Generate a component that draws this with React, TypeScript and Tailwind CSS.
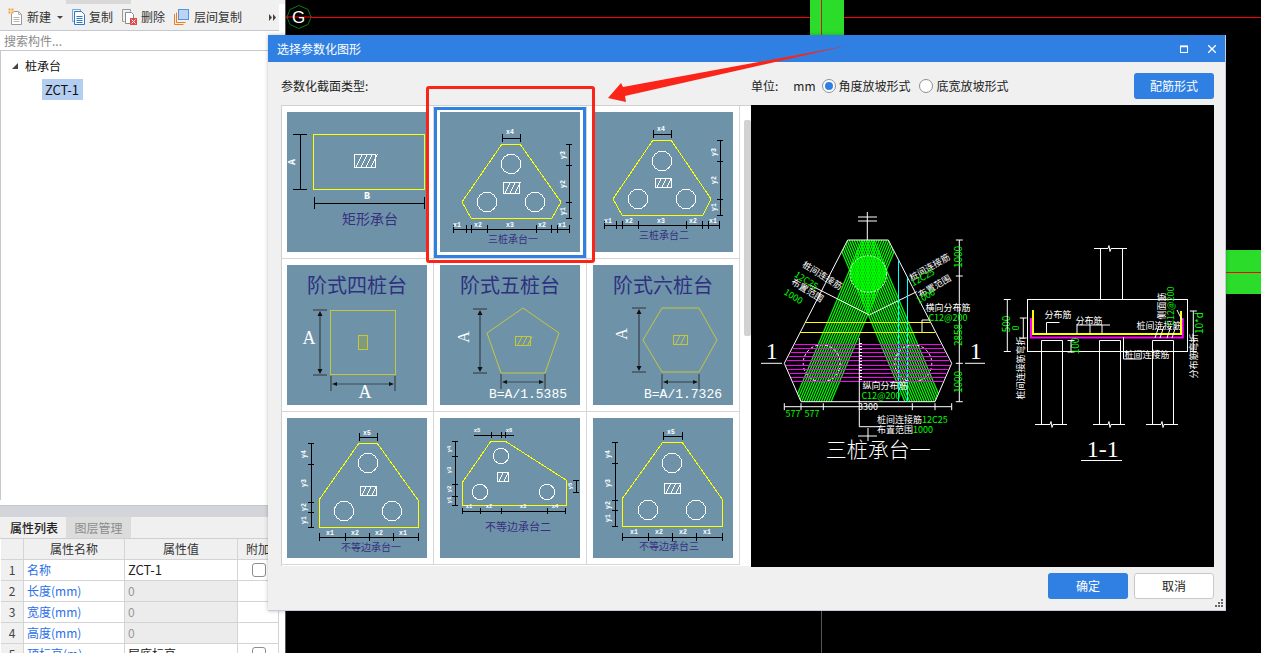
import React from "react";

const Y = "#ffff00";
const W = "#ffffff";
const K = "#000000";
const TITLE = "#37307f";

function HDim({ y, xs, t = 4 }: { y: number; xs: number[]; t?: number }) {
  return (
    <g stroke={K} strokeWidth={1}>
      <line x1={xs[0]} y1={y} x2={xs[xs.length - 1]} y2={y} />
      {xs.map((x) => (
        <line key={x} x1={x} y1={y - t} x2={x} y2={y + t} />
      ))}
    </g>
  );
}
function VDim({ x, ys, t = 3 }: { x: number; ys: number[]; t?: number }) {
  return (
    <g stroke={K} strokeWidth={1}>
      <line x1={x} y1={ys[0]} x2={x} y2={ys[ys.length - 1]} />
      {ys.map((y) => (
        <line key={y} x1={x - t} y1={y} x2={x + t} y2={y} />
      ))}
    </g>
  );
}
function L({ x, y, s, r, size = 6.5 }: { x: number; y: number; s: string; r?: boolean; size?: number }) {
  return (
    <text
      x={x}
      y={y}
      fontSize={size}
      fill={W}
      fontWeight={700}
      textAnchor="middle"
      dominantBaseline="middle"
      fontFamily="'Liberation Mono', monospace"
      transform={r ? `rotate(-90 ${x} ${y})` : undefined}
    >
      {s}
    </text>
  );
}
function Hatch({ x, y, w, h, c = W }: { x: number; y: number; w: number; h: number; c?: string }) {
  const n = Math.floor(w / 5);
  return (
    <g stroke={c} fill="none" strokeWidth={1}>
      <rect x={x} y={y} width={w} height={h} />
      {Array.from({ length: n }, (_, i) => (
        <line key={i} x1={x + 2 + i * 5} y1={y + h} x2={x + 2 + i * 5 + h * 0.5} y2={y} />
      ))}
    </g>
  );
}
function Circles({ cs, r = 9.7 }: { cs: number[][]; r?: number }) {
  return (
    <g stroke={W} fill="none" strokeWidth={1}>
      {cs.map((c) => (
        <circle key={c[0] + "-" + c[1]} cx={c[0]} cy={c[1]} r={r} />
      ))}
    </g>
  );
}
function Poly({ p, c = Y, w = 1 }: { p: number[][]; c?: string; w?: number }) {
  return <polygon points={p.map((a) => a.join(",")).join(" ")} fill="none" stroke={c} strokeWidth={w} />;
}
function Cap({ x, y, s, size = 10 }: { x: number; y: number; s: string; size?: number }) {
  return (
    <text x={x} y={y} fontSize={size} fill={TITLE} textAnchor="middle" dominantBaseline="middle">
      {s}
    </text>
  );
}
function SerifTitle({ s }: { s: string }) {
  return (
    <text
      x={70}
      y={23}
      fontSize={20}
      fill="#2f3180"
      textAnchor="middle"
      dominantBaseline="middle"
      fontFamily="'Noto Sans CJK SC', serif"
    >
      {s}
    </text>
  );
}
function Arrow2H({ y, a, b }: { y: number; a: number; b: number }) {
  return (
    <g>
      <line x1={a} y1={y - 8} x2={a} y2={y + 7} stroke="#333" />
      <line x1={b} y1={y - 8} x2={b} y2={y + 7} stroke="#333" />
      <line x1={a + 3} y1={y} x2={b - 3} y2={y} stroke="#3d4a55" strokeWidth={1.2} />
      <polygon points={`${a + 1},${y} ${a + 6},${y - 2} ${a + 6},${y + 2}`} fill="#111" />
      <polygon points={`${b - 1},${y} ${b - 6},${y - 2} ${b - 6},${y + 2}`} fill="#111" />
    </g>
  );
}
function Arrow2V({ x, a, b }: { x: number; a: number; b: number }) {
  return (
    <g>
      <line x1={x - 7} y1={a} x2={x + 7} y2={a} stroke="#333" />
      <line x1={x - 7} y1={b} x2={x + 7} y2={b} stroke="#333" />
      <line x1={x} y1={a + 3} x2={x} y2={b - 3} stroke="#3d4a55" strokeWidth={1.4} />
      <polygon points={`${x},${a + 1} ${x - 2.5},${a + 6} ${x + 2.5},${a + 6}`} fill="#111" />
      <polygon points={`${x},${b - 1} ${x - 2.5},${b - 6} ${x + 2.5},${b - 6}`} fill="#111" />
    </g>
  );
}
function DimHatch({ x, y, w, h }: { x: number; y: number; w: number; h: number }) {
  return <Hatch x={x} y={y} w={w} h={h} c="#c4c63c" />;
}

const thumbs: React.ReactNode[] = [
  <g key="1" shapeRendering="crispEdges">
    <rect x={26} y={22} width={111} height={55} fill="none" stroke={Y} />
    <Hatch x={67} y={42} w={21} h={13} />
    <VDim x={13} ys={[22, 77]} t={7} />
    <HDim y={91} xs={[27, 137]} t={6} />
    <L x={5} y={50} s="A" r size={10} />
    <L x={80} y={84} s="B" size={10} />
    <Cap x={83} y={108} s="矩形承台" size={14} />
  </g>,
  <g key="2" shapeRendering="crispEdges">
    <Poly p={[[62, 32], [80, 32], [121, 90], [112, 106], [31, 106], [22, 90]]} />
    <Circles cs={[[71, 52], [47, 90], [95, 90]]} />
    <Hatch x={63} y={70} w={16} h={11} />
    <HDim y={26} xs={[62, 80]} />
    <L x={70} y={20} s="x4" />
    <VDim x={129} ys={[32, 53, 90, 106]} />
    <L x={123} y={43} s="y3" r />
    <L x={123} y={72} s="y2" r />
    <L x={123} y={99} s="y1" r />
    <HDim y={117} xs={[13, 26, 31, 47, 96, 111, 117, 129]} />
    <L x={17} y={113} s="x1" />
    <L x={38} y={113} s="x2" />
    <L x={70} y={113} s="x3" />
    <L x={102} y={113} s="x2" />
    <L x={122} y={113} s="x1" />
    <Cap x={73} y={128} s="三桩承台一" />
  </g>,
  <g key="3" shapeRendering="crispEdges">
    <Poly p={[[60, 28], [78, 28], [118, 87], [110, 103], [29, 103], [20, 87]]} />
    <Circles cs={[[69, 49], [45, 87], [93, 87]]} />
    <Hatch x={62} y={66} w={16} h={9} />
    <HDim y={22} xs={[60, 78]} />
    <L x={68} y={17} s="x4" />
    <VDim x={127} ys={[28, 49, 87, 103]} />
    <L x={121} y={40} s="y3" r />
    <L x={121} y={68} s="y2" r />
    <L x={121} y={95} s="y1" r />
    <HDim y={113} xs={[11, 23, 29, 45, 93, 109, 115, 126]} />
    <L x={15} y={109} s="x1" />
    <L x={36} y={109} s="x2" />
    <L x={68} y={109} s="x3" />
    <L x={100} y={109} s="x2" />
    <L x={120} y={109} s="x1" />
    <Cap x={71} y={124} s="三桩承台二" />
  </g>,
  <g key="4">
    <SerifTitle s="阶式四桩台" />
    <rect x={43.5} y={45.5} width={65} height={64} fill="none" stroke="#c4c63c" />
    <rect x={71.5} y={70.5} width={9} height={14} fill="#7f9a7e" stroke="#c4c63c" />
    <Arrow2V x={33} a={45} b={110} />
    <Arrow2H y={119} a={44} b={108} />
    <text x={22} y={75} fontSize={18} fill={W} textAnchor="middle" dominantBaseline="middle" fontFamily="'Liberation Serif', serif">A</text>
    <text x={78} y={129} fontSize={18} fill={W} textAnchor="middle" dominantBaseline="middle" fontFamily="'Liberation Serif', serif">A</text>
  </g>,
  <g key="5">
    <SerifTitle s="阶式五桩台" />
    <Poly c="#c4c63c" p={[[83, 43], [119, 68], [105, 108], [61, 108], [47, 68]]} />
    <DimHatch x={75.5} y={71.5} w={15} h={9} />
    <Arrow2V x={40} a={44} b={108} />
    <Arrow2H y={117} a={61} b={105} />
    <text x={25} y={72} fontSize={16} fill={W} textAnchor="middle" dominantBaseline="middle" fontFamily="'Liberation Serif', serif" transform="rotate(-90 25 72)">A</text>
    <text x={49} y={133} fontSize={13} fill={W} fontFamily="'Liberation Mono', monospace">B=A/1.5385</text>
  </g>,
  <g key="6">
    <SerifTitle s="阶式六桩台" />
    <Poly c="#c4c63c" p={[[69, 43], [106, 43], [124, 75], [106, 107], [69, 107], [50, 75]]} />
    <DimHatch x={80.5} y={70.5} w={14} h={9} />
    <Arrow2V x={46} a={43} b={107} />
    <Arrow2H y={117} a={69} b={106} />
    <text x={30} y={69} fontSize={16} fill={W} textAnchor="middle" dominantBaseline="middle" fontFamily="'Liberation Serif', serif" transform="rotate(-90 30 69)">A</text>
    <text x={51} y={133} fontSize={13} fill={W} fontFamily="'Liberation Mono', monospace">B=A/1.7326</text>
  </g>,
  <g key="7" shapeRendering="crispEdges">
    <Poly p={[[72, 25], [90, 25], [131, 82], [131, 109], [32, 109], [32, 82]]} />
    <Circles cs={[[81, 45], [57, 93], [105, 93]]} />
    <Hatch x={73} y={68} w={16} h={9} />
    <HDim y={19} xs={[72, 90]} />
    <L x={80} y={15} s="x5" />
    <VDim x={24} ys={[25, 46, 84, 94, 109]} />
    <L x={17} y={36} s="y4" r />
    <L x={17} y={65} s="y3" r />
    <L x={17} y={89} s="y2" r />
    <L x={17} y={102} s="y1" r />
    <HDim y={119} xs={[32, 58, 82, 106, 131]} />
    <L x={43} y={115} s="x1" />
    <L x={68} y={115} s="x2" />
    <L x={92} y={115} s="x2" />
    <L x={116} y={115} s="x1" />
    <Cap x={84} y={130} s="不等边承台一" />
  </g>,
  <g key="8" shapeRendering="crispEdges">
    <Poly p={[[51, 23], [65, 23], [126, 62], [126, 87], [22, 87], [22, 65]]} />
    <Circles cs={[[61, 38], [40, 74], [107, 74]]} r={7.7} />
    <Hatch x={57} y={54} w={11} h={9} />
    <HDim y={17} xs={[51, 61, 65]} t={3} />
    <line x1={34} y1={17} x2={51} y2={17} stroke={K} />
    <line x1={65} y1={17} x2={74} y2={17} stroke={K} />
    <L x={37} y={13} s="x5" size={5.5} />
    <L x={69} y={13} s="x6" size={5.5} />
    <VDim x={15} ys={[23, 38, 66, 78, 87]} />
    <L x={10} y={31} s="y4" r size={5.5} />
    <L x={10} y={52} s="y3" r size={5.5} />
    <L x={10} y={71} s="y2" r size={5.5} />
    <L x={10} y={82} s="y1" r size={5.5} />
    <VDim x={136} ys={[62, 74]} />
    <L x={131} y={68} s="y5" r size={5.5} />
    <HDim y={93} xs={[22, 40, 61, 107, 125]} t={3} />
    <L x={29} y={89} s="x1" size={5.5} />
    <L x={49} y={89} s="x2" size={5.5} />
    <L x={83} y={89} s="x3" size={5.5} />
    <L x={115} y={89} s="x4" size={5.5} />
    <Cap x={78} y={110} s="不等边承台二" size={11} />
  </g>,
  <g key="9" shapeRendering="crispEdges">
    <Poly p={[[70, 24], [89, 24], [129, 81], [129, 108], [29, 108], [29, 81]]} />
    <Circles cs={[[79, 45], [55, 92], [103, 92]]} />
    <Hatch x={71} y={65} w={16} h={10} />
    <HDim y={18} xs={[70, 89]} />
    <L x={78} y={14} s="x5" />
    <VDim x={22} ys={[24, 45, 82, 92, 108]} />
    <L x={15} y={36} s="y4" r />
    <L x={15} y={65} s="y3" r />
    <L x={15} y={87} s="y2" r />
    <L x={15} y={100} s="y1" r />
    <HDim y={119} xs={[29, 55, 79, 103, 129]} />
    <L x={41} y={114} s="x1" />
    <L x={66} y={114} s="x2" />
    <L x={90} y={114} s="x2" />
    <L x={114} y={114} s="x1" />
    <Cap x={76} y={129} s="不等边承台三" />
  </g>,
];

function GT({
  x,
  y,
  s,
  r = 0,
  c = W,
  size = 9,
  a = "middle",
  serif,
  light,
}: {
  x: number;
  y: number;
  s: string;
  r?: number;
  c?: string;
  size?: number;
  a?: "middle" | "start";
  serif?: boolean;
  light?: boolean;
}) {
  return (
    <text
      x={x}
      y={y}
      fontSize={size}
      fill={c}
      textAnchor={a}
      dominantBaseline="middle"
      fontFamily={serif ? "'Liberation Serif', serif" : undefined}
      fontWeight={light ? 300 : undefined}
      transform={r ? `rotate(${r} ${x} ${y})` : undefined}
    >
      {s}
    </text>
  );
}

const GREEN = "#00ff00";

function CadDrawing() {
  const bandLines = Array.from({ length: 16 }, (_, i) => i * 2.45);
  const magenta = Array.from({ length: 10 }, (_, i) => 433 + i * 12.4);
  const leftAt = (y: number) => (y <= 490 ? 103 + ((490 - y) * 190) / 370 : 103 + ((y - 490) * 50) / 115);
  return (
    <svg viewBox="751 105 463 462" className="block w-full h-full">
      <defs>
        <clipPath id="hexClip">
          <polygon points="847.7,240 888.3,240 951.7,363.3 935,401.7 801,401.7 784.3,363.3" />
        </clipPath>
      </defs>
      <g stroke={GREEN} strokeWidth={1.25} clipPath="url(#hexClip)">
        {bandLines.map((d) => (
          <line key={"a" + d} x1={794.3 + d} y1={401.7} x2={862.2 + d} y2={240} />
        ))}
        {bandLines.map((d) => (
          <line key={"b" + d} x1={941.7 - d} y1={401.7} x2={873.8 - d} y2={240} />
        ))}
      </g>
      <circle cx={868.3} cy={274} r={18.3} fill={GREEN} fillOpacity={0.6} stroke={W} strokeDasharray="2 1.5" />
      <circle cx={821.7} cy={363.3} r={18.5} fill="none" stroke={W} strokeDasharray="3 2" />
      <circle cx={913.3} cy={363.3} r={18.5} fill="none" stroke={W} strokeDasharray="3 2" />
      <polygon points="847.7,240 888.3,240 951.7,363.3 935,401.7 801,401.7 784.3,363.3" fill="none" stroke={W} />
      <polyline points="810,285 869.3,315 916.7,291.7" fill="none" stroke={W} />
      <line x1={867.3} y1={212} x2={867.3} y2={240} stroke={W} />
      <line x1={858} y1={217} x2={877} y2={217} stroke={W} />
      <line x1={858} y1={221} x2={877} y2={221} stroke={W} />
      <g shapeRendering="crispEdges">
        <line x1={805} y1={322.3} x2={930} y2={322.3} stroke={Y} />
        <line x1={800} y1={332.7} x2={935} y2={332.7} stroke={Y} />
        <line x1={898.3} y1={260} x2={898.3} y2={401.7} stroke="#00ffff" />
        <line x1={907.3} y1={278.3} x2={907.3} y2={401.7} stroke="#00ffff" />
        {magenta.map((y) => (
          <line key={y} x1={750 + leftAt(y) / 3 + 1} y1={200 + y / 3} x2={750 + (708 - leftAt(y)) / 3 - 1} y2={200 + y / 3} stroke="#ff00ff" />
        ))}
      </g>
      <polyline points="859.3,338 859.3,426.7 880,426.7" fill="none" stroke={W} />
      <line x1={860.5} y1={343} x2={860.5} y2={382} stroke={W} strokeDasharray="1 2" strokeWidth={3} />
      <polyline points="922,332 922,320 930,320" fill="none" stroke={W} />
      <line x1={868} y1={428} x2={868} y2={441} stroke={W} />
      <line x1={858} y1={436} x2={877} y2={436} stroke={W} />
      <VDim2 x={959.3} ys={[240, 276, 363.3, 401.7]} />
      <HDim2 y={406.7} xs={[784.3, 801, 823.3, 912.3, 935, 951.7]} />
      <GT x={959.3} y={257} s="1000" r={-90} c={GREEN} size={10} />
      <GT x={959.3} y={335} s="2858" r={-90} c={GREEN} size={10} />
      <GT x={959.3} y={382} s="1000" r={-90} c={GREEN} size={10} />
      <GT x={793} y={415} s="577" c={GREEN} />
      <GT x={812} y={415} s="577" c={GREEN} />
      <GT x={868} y={408} s="3300" />
      <GT x={771.7} y={353} s="1" size={24} serif />
      <line x1={761} y1={363.3} x2={782} y2={363.3} stroke={W} />
      <GT x={975.7} y={353} s="1" size={24} serif />
      <line x1={965} y1={363.3} x2={985} y2={363.3} stroke={W} />
      <GT x={878.3} y={451} s="三桩承台一" size={21} light />
      <GT x={822} y={276} s="桩间连接筋" r={32} />
      <GT x={806} y={281} s="12C25" r={32} c={GREEN} />
      <GT x={807} y={291} s="布置范围" r={32} />
      <GT x={793} y={297} s="1000" r={32} c={GREEN} />
      <GT x={930} y={268} s="桩间连接筋" r={-30} />
      <GT x={923} y={278} s="12C25" r={-30} c={GREEN} />
      <GT x={935} y={287} s="布置范围" r={-30} />
      <GT x={926} y={297} s="1000" r={-30} c={GREEN} />
      <GT x={948} y={309} s="横向分布筋" />
      <GT x={948} y={319} s="C12@200" c={GREEN} />
      <GT x={885} y={387} s="纵向分布筋" />
      <GT x={881} y={397} s="C12@200" c={GREEN} />
      <GT x={877} y={421} s="桩间连接筋" a="start" />
      <GT x={922} y={421} s="12C25" c={GREEN} a="start" />
      <GT x={877} y={431} s="布置范围" a="start" />
      <GT x={913} y={431} s="1000" c={GREEN} a="start" />

      {/* 1-1 section */}
      <rect x={1027.5} y={299.5} width={160} height={52} fill="none" stroke={W} />
      <path d="M1100.5 248v51M1122.5 248v51M1094 248.5h14l1 -3l1 6l1 -3h16" fill="none" stroke={W} />
      <path d="M1041.5 340.5v84M1062.5 340.5v84M1041.5 340.5h21M1099.5 340.5v84M1120.5 340.5v84M1099.5 340.5h21M1152.5 340.5v84M1173.5 340.5v84M1152.5 340.5h21" fill="none" stroke={W} />
      <path d="M1035 424.5h15l1 -3l1 6l1 -3h14M1093 424.5h15l1 -3l1 6l1 -3h14M1146 424.5h15l1 -3l1 6l1 -3h14" fill="none" stroke={W} />
      <path d="M1031 318v19.5h151.7v-19.5" fill="none" stroke="#ff00ff" strokeWidth={2} />
      <path d="M1033 310v24h148v-23" fill="none" stroke={Y} strokeWidth={2} />
      <path d="M1046.5 334v-11.5h13M1077 334v-9h33M1090 325v9M1102 325v9" fill="none" stroke={W} />
      <path d="M1123.5 337v22h18" fill="none" stroke={W} />
      <path d="M1155 338l4 -12M1160 338l4 -12M1167 338l4 -12M1172 338l4 -12M1177 310l5 10" fill="none" stroke={W} />
      <GT x={1058} y={316} s="分布筋" />
      <GT x={1089} y={322} s="分布筋" />
      <GT x={1159} y={327} s="桩间连接筋" />
      <GT x={1147} y={356} s="桩间连接筋" />
      <GT x={1163} y={306} s="侧面筋" r={-90} />
      <GT x={1172} y={306} s="C12@200" r={-90} c={GREEN} />
      <GT x={1007} y={324} s="500" r={-90} c={GREEN} size={10} />
      <GT x={1017} y={328} s="0" r={-90} c={GREEN} />
      <GT x={1076} y={346} s="100" r={-90} c={GREEN} size={10} />
      <GT x={1200} y={323} s="10*d" r={-90} c={GREEN} size={10} />
      <GT x={1022} y={368} s="桩间连接筋弯折" r={-90} />
      <GT x={1195} y={356} s="分布筋弯折" r={-90} />
      <VDim2 x={1007.3} ys={[299.5, 351.5]} />
      <VDim2 x={1023.3} ys={[318, 338]} />
      <VDim2 x={1071} ys={[340.5, 352]} />
      <VDim2 x={1193.3} ys={[311, 351.5]} />
      <GT x={1102.7} y={451} s="1-1" size={24} serif />
      <line x1={1081} y1={460.5} x2={1122} y2={460.5} stroke={W} />
    </svg>
  );
}
function VDim2({ x, ys }: { x: number; ys: number[] }) {
  return (
    <g stroke={W}>
      <line x1={x} y1={ys[0]} x2={x} y2={ys[ys.length - 1]} />
      {ys.map((y) => (
        <line key={y} x1={x - 3.5} y1={y} x2={x + 3.5} y2={y} />
      ))}
    </g>
  );
}
function HDim2({ y, xs }: { y: number; xs: number[] }) {
  return (
    <g stroke={W}>
      <line x1={xs[0]} y1={y} x2={xs[xs.length - 1]} y2={y} />
      {xs.map((x) => (
        <line key={x} x1={x} y1={y - 3.5} x2={x} y2={y + 3.5} />
      ))}
    </g>
  );
}

const IconNew = () => (
  <svg width="16" height="18" viewBox="0 0 16 18" fill="none">
    <path d="M3.5 3.5h7l3 3v10h-10z" fill="#fff" stroke="#9a9a9a" />
    <path d="M10.5 3.5v3h3M5.5 9.5h6M5.5 11.5h6M5.5 13.5h6" stroke="#b5b5b5" />
    <rect x="0.5" y="0.5" width="5" height="5" fill="#f6a43c" />
    <path d="M3 0v6M0 3h6" stroke="#fff" strokeWidth="0.7" />
  </svg>
);
const IconCopy = () => (
  <svg width="14" height="16" viewBox="0 0 14 16" fill="none">
    <path d="M.5 .5h8v2" stroke="#7fa8d8" />
    <path d="M.5 .5v12h2" stroke="#7fa8d8" />
    <path d="M2.5 2.5h7l3 3v10h-10z" fill="#fff" stroke="#2f78c8" />
    <path d="M4.5 7.5h6M4.5 9.5h6M4.5 11.5h6M4.5 13.5h6" stroke="#2f78c8" />
  </svg>
);
const IconDel = () => (
  <svg width="16" height="16" viewBox="0 0 16 16" fill="none">
    <path d="M.5 .5h8v2M.5 .5v12h2" stroke="#999" />
    <path d="M3.5 3.5h6l2 2v9h-8z" fill="#fff" stroke="#8a8a8a" />
    <rect x="8" y="9" width="7" height="7" fill="#dd4a4a" />
    <path d="M9.5 10.5l4 4M13.5 10.5l-4 4" stroke="#fff" />
  </svg>
);
const IconLayer = () => (
  <svg width="15" height="16" viewBox="0 0 15 16" fill="none">
    <path d="M.5 5v10.5h9M2.5 3.5v10h9" stroke="#f07c20" />
    <rect x="4.5" y=".5" width="10" height="10" fill="#b9d4f5" stroke="#5b93d8" />
  </svg>
);

const cols = "grid grid-cols-[23px_101px_113px_41px]";
const cell = "h-[21px] border-r border-b border-[#d4d4d4] flex items-center overflow-hidden whitespace-nowrap";

function Check() {
  return <span className="block w-[14px] h-[14px] rounded-[3px] border border-[#8e8e8e] bg-white" />;
}

const rows: [string, string, string, boolean, boolean][] = [
  ["1", "名称", "ZCT-1", false, true],
  ["2", "长度(mm)", "0", true, false],
  ["3", "宽度(mm)", "0", true, false],
  ["4", "高度(mm)", "0", true, false],
  ["5", "顶标高(m)", "层底标高", false, true],
];

function Radio({ on }: { on?: boolean }) {
  return (
    <span className="flex items-center justify-center w-[14px] h-[14px] rounded-full border border-[#8f8f8f] bg-white">
      {on && <span className="block w-[8px] h-[8px] rounded-full bg-[#2f80e2]" />}
    </span>
  );
}

export default function App() {
  return (
    <div className="relative w-[1261px] h-[653px] overflow-hidden bg-black flex text-[12px] text-[#222] font-['Noto_Sans_CJK_SC','Noto_Sans',sans-serif]">
      {/* left panel */}
      <aside className="w-[285px] h-full bg-white flex flex-col shrink-0">
        <div className="h-[4px] bg-[#f0f0f0] flex shrink-0">
          <div className="w-[66px] bg-[#f0f0f0]" />
          <div className="w-[65px] bg-[#d9d9d9]" />
        </div>
        <div className="h-[27px] w-[279px] bg-[#f0f0f0] border-b border-[#c5c8d0] flex items-center pl-[8px] shrink-0 text-[#333]">
          <IconNew />
          <span className="ml-[3px]">新建</span>
          <span className="ml-[6px] w-0 h-0 border-x-[3px] border-x-transparent border-t-[3px] border-t-[#444]" />
          <span className="ml-[9px] flex"><IconCopy /></span>
          <span className="ml-[3px]">复制</span>
          <span className="ml-[9px] flex"><IconDel /></span>
          <span className="ml-[3px]">删除</span>
          <span className="ml-[9px] flex"><IconLayer /></span>
          <span className="ml-[5px]">层间复制</span>
          <svg className="ml-[27px]" width="7" height="7" viewBox="0 0 7 7" fill="#444">
            <path d="M0 0l3 3.5l-3 3.5zM4 0l3 3.5l-3 3.5z" />
          </svg>
        </div>
        <div className="h-[20px] w-[279px] bg-white border-b border-[#c5c8d0] flex items-center pl-[4px] text-[#8a8a8a] shrink-0">
          搜索构件...
        </div>
        <div className="h-[449px] w-[279px] border-l border-[#c5c8d0] shrink-0 bg-white">
          <div className="flex items-center h-[24px] mt-[3px] pl-[11px]">
            <span className="w-0 h-0 border-l-[6px] border-l-transparent border-b-[6px] border-b-[#444]" />
            <span className="ml-[7px] text-[#111]">桩承台</span>
          </div>
          <div className="ml-[41px] mt-px w-[41px] h-[21px] bg-[#b3cef0] flex items-center pl-[3px] text-[13px] text-[#111]">ZCT-1</div>
        </div>
        <div className="h-[5px] bg-white shrink-0" />
        <div className="h-[12px] w-[279px] bg-[#d3d5da] border-t border-[#c5c8d0] shrink-0" />
        <div className="h-[22px] w-[279px] bg-[#f0f0f0] flex items-stretch shrink-0 border-b border-[#cfcfcf]">
          <div className="ml-[2px] w-[64px] flex items-center justify-center text-[#222] font-medium">属性列表</div>
          <div className="w-[65px] bg-[#dcdcdc] flex items-center justify-center text-[#8c8c8c]">图层管理</div>
        </div>
        <div className="w-[279px] pl-[1px] bg-white">
          <div className={cols}>
            <div className={`${cell} bg-[#f0f0f0]`} />
            <div className={`${cell} bg-[#f0f0f0] justify-center text-[#333]`}>属性名称</div>
            <div className={`${cell} bg-[#f0f0f0] justify-center text-[#333]`}>属性值</div>
            <div className={`${cell} bg-[#f0f0f0] pl-[8px] text-[#333]`}>附加</div>
          </div>
          {rows.map((r) => (
            <div key={r[0]} className={cols}>
              <div className={`${cell} bg-[#f0f0f0] justify-center text-[#444]`}>{r[0]}</div>
              <div className={`${cell} pl-[3px] text-[#2a6fe8]`}>{r[1]}</div>
              <div className={`${cell} pl-[3px] ${r[3] ? "bg-[#ececec] text-[#999]" : r[0] === "1" ? "text-[#222] text-[13px]" : "text-[#222]"}`}>{r[2]}</div>
              <div className={`${cell} justify-center pl-[2px]`}>{r[4] && <Check />}</div>
            </div>
          ))}
        </div>
      </aside>

      {/* CAD canvas */}
      <main className="relative flex-1 h-full bg-black">
        <div className="absolute left-0 right-0 top-[17px] h-px bg-[#ff0000]" />
        <div className="absolute left-[525px] top-0 w-[34px] h-[35px] bg-[#2bdc2b]" />
        <div className="absolute left-[536px] top-0 w-px h-[35px] bg-[#d01818]" />
        <div className="absolute left-[536px] top-[35px] w-px h-[618px] bg-[#555]" />
        <div className="absolute left-0 top-0 w-px h-full bg-[#555]" />
        <div className="absolute right-0 top-[250px] w-[35px] h-[44px] bg-[#2bdc2b]" />
        <div className="absolute right-0 top-[272px] w-[35px] h-px bg-[#ff0000]" />
        <svg className="absolute left-[1px] top-[4px]" width="26" height="26" viewBox="0 0 26 26">
          <polygon points="13,1.5 22,5.5 25,13 22,20.5 13,24.5 4,20.5 1,13 4,5.5" fill="#000" stroke="#0e7a0e" />
          <line x1="0" y1="13" x2="26" y2="13" stroke="#ff0000" />
          <text x="12.5" y="19" fontSize="17" textAnchor="middle" fill="#fff" fontFamily="'Liberation Sans', sans-serif">G</text>
        </svg>
      </main>

      {/* dialog */}
      <section className="absolute left-[268px] top-[35px] w-[958px] h-[576px] bg-[#f0f0f0] border-r border-b border-[#c5cbd8] flex flex-col shadow-[0_0_4px_rgba(0,0,0,0.25)]">
        <header className="h-[27px] bg-[#2f80e2] flex items-center pl-[9px] pr-[9px] text-white shrink-0">
          <span className="flex-1">选择参数化图形</span>
          <svg width="8" height="8" viewBox="0 0 8 8" fill="none" stroke="#fff">
            <rect x=".5" y="1" width="7" height="6.5" />
            <line x1="0" y1="1.5" x2="8" y2="1.5" strokeWidth="1.5" />
          </svg>
          <svg className="ml-[20px]" width="8" height="8" viewBox="0 0 8 8" stroke="#fff" strokeWidth="1.3">
            <path d="M0 0l8 8M8 0l-8 8" />
          </svg>
        </header>
        <div className="flex items-center h-[43px] pt-[5px] pl-[13px] pr-[11px] shrink-0 text-[#222]">
          <span className="w-[470px]">参数化截面类型:</span>
          <span>单位:</span>
          <span className="ml-[15px]">mm</span>
          <span className="ml-[6px]"><Radio on /></span>
          <span className="ml-[3px]">角度放坡形式</span>
          <span className="ml-[8px]"><Radio /></span>
          <span className="ml-[4px]">底宽放坡形式</span>
          <button className="ml-auto w-[80px] h-[26px] rounded-[3px] bg-[#2f80e2] text-white text-[12px]">配筋形式</button>
        </div>
        <div className="flex pl-[13px] pr-[11px] h-[462px] shrink-0">
          <div className="relative w-[470px] h-[461px] bg-white shadow-[inset_1px_1px_0_#cfcfcf] overflow-hidden">
            <div className="grid grid-cols-[153px_153px_153px] pt-px">
              {thumbs.map((t, i) => (
                <div key={i} className="relative h-[153px] p-[6px] border-r border-b border-[#d6d6d6]">
                  {i === 1 && <span className="absolute left-0 top-px w-[152px] h-[151px] border-[3px] border-[#2f80e2]" />}
                  <svg viewBox="0 0 140 140" width="140" height="140" className="block bg-[#6e93a9]">
                    {t}
                  </svg>
                </div>
              ))}
            </div>
            <div className="absolute left-[463px] top-[15px] w-[7px] h-[216px] bg-[#d2d2d2] rounded-[2px]" />
          </div>
          <div className="w-[463px] h-[462px] bg-black">
            <CadDrawing />
          </div>
        </div>
        <footer className="flex-1 flex items-start justify-end gap-[6px] pr-[11px] pt-[6px]">
          <button className="w-[80px] h-[26px] rounded-[3px] bg-[#2f80e2] text-white text-[12px]">确定</button>
          <button className="w-[80px] h-[26px] rounded-[3px] bg-white border border-[#c8c8c8] text-[#222] text-[12px]">取消</button>
        </footer>
        <svg className="absolute right-[2px] bottom-[3px]" width="8" height="8" viewBox="0 0 8 8" fill="#666">
          <rect x="6" y="0" width="2" height="2" />
          <rect x="3" y="3" width="2" height="2" />
          <rect x="6" y="3" width="2" height="2" />
          <rect x="0" y="6" width="2" height="2" />
          <rect x="3" y="6" width="2" height="2" />
          <rect x="6" y="6" width="2" height="2" />
        </svg>
      </section>

      {/* annotation */}
      <div className="absolute left-[426px] top-[86px] w-[169px] h-[177px] border-[3px] border-[#fb2419] rounded-[3px] pointer-events-none" />
      <svg className="absolute left-0 top-0 pointer-events-none" width="1261" height="653" viewBox="0 0 1261 653">
        <polygon points="846,46 623,87 621,83 608,98 626,102 625,96" fill="#fb2419" />
      </svg>
    </div>
  );
}
